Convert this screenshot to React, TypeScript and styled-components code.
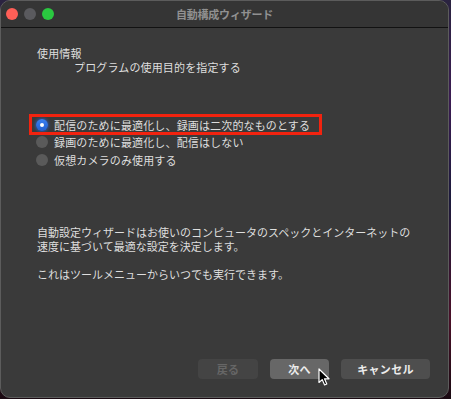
import React from "react";
import styled, { createGlobalStyle } from "styled-components";

const GlobalStyle = createGlobalStyle`
	html, body {
		margin: 0;
		padding: 0;
		height: 100%;
		overflow: hidden;
	}

	body {
		background: linear-gradient(180deg, #2a2340 0%, #3b1c52 25%, #1c1a3c 50%, #4a1028 80%, #1a0a12 100%);
		font-family: "Noto Sans CJK JP", "Noto Sans", sans-serif;
	}
`;

const Window = styled("div")`
	box-sizing: border-box;
	display: flex;
	flex-direction: column;
	width: 449px;
	height: 398px;
	background-color: #3a3a3a;
	border: 1px solid #5c5c5c;
	border-radius: 10px;
	overflow: hidden;
	position: relative;
`;

const TitleBar = styled("div")`
	flex: none;
	height: 26px;
	display: flex;
	align-items: center;
	position: relative;
	background-color: #353535;
	border-bottom: 1px solid #121212;
	padding-left: 5px;
`;

const Lights = styled("div")`
	display: flex;
	gap: 6px;
`;

const Light = styled("span")<{ $color: string }>`
	width: 12px;
	height: 12px;
	border-radius: 50%;
	background-color: ${({ $color }) => $color};
`;

const Title = styled("div")`
	position: absolute;
	left: 0;
	right: 0;
	text-align: center;
	font-size: 11px;
	font-weight: 600;
	color: #909090;
	letter-spacing: -0.2px;
`;

const Content = styled("div")`
	flex: 1;
	display: flex;
	flex-direction: column;
	padding: 18px 18px 18px 36px;
	color: #dedede;
	font-size: 11px;
	line-height: 14px;
	letter-spacing: 0.15px;
`;

const Heading = styled("div")``;

const SubHeading = styled("div")`
	margin-left: 37px;
`;

const Options = styled("div")`
	display: flex;
	flex-direction: column;
	margin-top: 42px;
	margin-left: -1px;
`;

const Option = styled("div")<{ $highlighted?: boolean }>`
	position: relative;
	display: flex;
	align-items: center;
	gap: 6px;
	height: 17.5px;
	width: fit-content;

	${({ $highlighted }) =>
		$highlighted &&
		`
		&::after {
			content: "";
			position: absolute;
			left: -7px;
			right: -12px;
			top: -2px;
			bottom: -1px;
			border: 3px solid #f2230f;
		}
	`}
`;

const Radio = styled("span")<{ $checked?: boolean }>`
	box-sizing: border-box;
	width: 12px;
	height: 12px;
	border-radius: 50%;
	display: flex;
	align-items: center;
	justify-content: center;
	background: ${({ $checked }) =>
		$checked ? "linear-gradient(180deg, #3a7ff0, #235fd0)" : "#5a5a5a"};
	box-shadow: ${({ $checked }) => ($checked ? "0 0 3px 1px rgba(40, 100, 220, 0.6)" : "none")};

	&::before {
		content: "";
		width: 4px;
		height: 4px;
		border-radius: 50%;
		background-color: #ffffff;
		display: ${({ $checked }) => ($checked ? "block" : "none")};
	}
`;

const Paragraph = styled("p")<{ $gap: number }>`
	margin: ${({ $gap }) => $gap}px 0 0;
	letter-spacing: 0;
`;

const ButtonRow = styled("div")`
	margin-top: auto;
	display: flex;
	justify-content: flex-end;
	gap: 12px;
	position: relative;
`;

const Button = styled("div")<{ $variant: "disabled" | "default" | "normal"; $width: number }>`
	width: ${({ $width }) => $width}px;
	height: 20px;
	border-radius: 4px;
	display: flex;
	align-items: center;
	justify-content: center;
	font-size: 11px;
	font-weight: 600;
	letter-spacing: 0.3px;
	background-color: ${({ $variant }) =>
		$variant === "disabled" ? "#444444" : $variant === "default" ? "#676767" : "#4e4e4e"};
	color: ${({ $variant }) => ($variant === "disabled" ? "#666666" : "#ececec")};
`;

const Cursor = styled("svg")`
	position: absolute;
	left: 281px;
	top: 9px;
`;

export default function App() {
	return (
		<>
			<GlobalStyle />
			<Window>
				<TitleBar>
					<Lights>
						<Light $color="#fe5f57" />
						<Light $color="#5a5a5e" />
						<Light $color="#2ac840" />
					</Lights>
					<Title>自動構成ウィザード</Title>
				</TitleBar>
				<Content>
					<Heading>使用情報</Heading>
					<SubHeading>プログラムの使用目的を指定する</SubHeading>

					<Options>
						<Option $highlighted>
							<Radio $checked />
							配信のために最適化し、録画は二次的なものとする
						</Option>
						<Option>
							<Radio />
							録画のために最適化し、配信はしない
						</Option>
						<Option>
							<Radio />
							仮想カメラのみ使用する
						</Option>
					</Options>

					<Paragraph $gap={56}>
						自動設定ウィザードはお使いのコンピュータのスペックとインターネットの
						<br />
						速度に基づいて最適な設定を決定します。
					</Paragraph>
					<Paragraph $gap={14}>これはツールメニューからいつでも実行できます。</Paragraph>

					<ButtonRow>
						<Button $variant="disabled" $width={60}>
							戻る
						</Button>
						<Button $variant="default" $width={59}>
							次へ
						</Button>
						<Button $variant="normal" $width={89}>
							キャンセル
						</Button>
						<Cursor width="13" height="18" viewBox="0 0 13 18">
							<path
								d="M1 1 L1 14.5 L4.2 11.6 L6.6 17 L8.8 16 L6.5 10.8 L11 10.8 Z"
								fill="#000000"
								stroke="#ffffff"
								strokeWidth="1.2"
								strokeLinejoin="round"
							/>
						</Cursor>
					</ButtonRow>
				</Content>
			</Window>
		</>
	);
}
